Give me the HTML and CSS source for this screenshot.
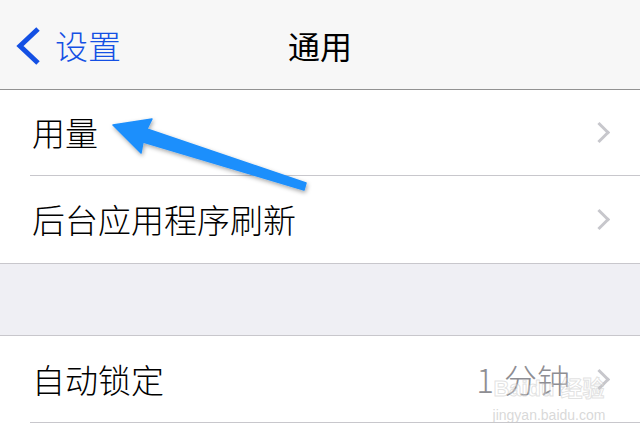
FILE: index.html
```html
<!DOCTYPE html>
<html lang="zh-CN">
<head>
<meta charset="utf-8">
<title>通用</title>
<link rel="stylesheet" href="styles.css">
</head>
<body>
<div class="screen">
  <header class="nav">
    <a class="back">
      <svg class="back-icon" width="27" height="40" viewBox="0 0 27 40"><path d="M23 3 L5 20 L23 37" fill="none" stroke="#1450e4" stroke-width="5"/></svg>
      <span>设置</span>
    </a>
    <h1 class="title">通用</h1>
  </header>

  <section class="group first">
    <div class="row"><div class="row-inner r1"><span class="label">用量</span><span class="chev"></span></div></div>
    <div class="row"><div class="row-inner r2 last"><span class="label">后台应用程序刷新</span><span class="chev"></span></div></div>
  </section>

  <div class="gap"></div>

  <section class="group second">
    <div class="row"><div class="row-inner r3"><span class="label">自动锁定</span><span class="value"><span class="num">1</span>分钟</span><span class="chev"></span></div></div>
  </section>

  <svg class="arrow" width="640" height="433" viewBox="0 0 640 433">
    <defs>
      <filter id="sh" x="-20%" y="-20%" width="140%" height="160%">
        <feDropShadow dx="1" dy="2" stdDeviation="2" flood-color="#000" flood-opacity="0.35"/>
      </filter>
    </defs>
    <polygon points="113,125 152,119 147,129 306,183 304,190 143,142 141,153" fill="#1e8ffc" stroke="#1e8ffc" stroke-width="1.5" stroke-linejoin="round" filter="url(#sh)"/>
  </svg>

  <div class="watermark">
    <div class="wm-logo">Baidu 经验</div>
    <div class="wm-url">jingyan.baidu.com</div>
  </div>
</div>
</body>
</html>
```
FILE: styles.css
```css
* { box-sizing: border-box; margin: 0; padding: 0; }
html, body { background: #fff; }
body {
  width: 640px;
  height: 433px;
  overflow: hidden;
  font-family: "Noto Sans CJK SC", "Noto Sans", sans-serif;
}
.screen { position: relative; width: 640px; height: 433px; background: #fff; }

.nav {
  height: 90px;
  background: #f7f7f7;
  border-bottom: 1px solid #929292;
  display: flex;
  align-items: center;
  position: relative;
}
.back {
  display: flex;
  align-items: center;
  gap: 13px;
  padding-left: 15px;
  color: #1450e4;
  font-size: 33px;
  font-weight: 300;
  line-height: 1;
  padding-top: 2px;
}
.back-icon { display: block; }
.title {
  position: absolute;
  left: 0; right: 0;
  top: 0; bottom: 0;
  display: flex;
  align-items: center;
  justify-content: center;
  font-size: 32px;
  font-weight: 400;
  color: #000;
  pointer-events: none;
  padding-top: 1px;
}

.group { background: #fff; }
.group.first { border-bottom: 1px solid #c8c7cc; }
.group.second { border-top: 1px solid #c8c7cc; }

.row { padding-left: 30px; }
.row-inner {
  display: flex;
  align-items: center;
  border-bottom: 1px solid #c8c7cc;
  padding-right: 30px;
}
.row-inner.last { border-bottom: none; }
.r1 { height: 86px; }
.r2 { height: 87px; }
.r3 { height: 87px; }

.label {
  flex: 1;
  font-size: 33px;
  font-weight: 300;
  line-height: 1;
  color: #000;
  padding-left: 2px;
}
.value {
  font-size: 33px;
  font-weight: 300;
  line-height: 1;
  color: #8e8e93;
  margin-right: 22px;
}
.num { margin-right: 10px; }
.chev {
  width: 15px;
  height: 15px;
  border-top: 3px solid #c7c7cc;
  border-right: 3px solid #c7c7cc;
  transform: rotate(45deg);
  margin-right: 3px;
}

.gap {
  height: 71px;
  background: #efeff4;
}

.arrow {
  position: absolute;
  left: 0;
  top: 0;
  pointer-events: none;
}

.watermark {
  position: absolute;
  left: 490px;
  top: 378px;
  width: 118px;
  text-align: center;
  pointer-events: none;
}
.wm-logo {
  font-family: "Liberation Sans", "Noto Sans CJK SC", sans-serif;
  font-size: 22px;
  font-weight: 700;
  line-height: 1;
  -webkit-text-stroke: 1px rgba(190,190,190,0.45);
  color: rgba(255,255,255,0.25);
}
.wm-url {
  font-family: "Liberation Sans", sans-serif;
  font-size: 14px;
  line-height: 1;
  margin-top: 8px;
  color: rgba(200,200,200,0.7);
}
```
